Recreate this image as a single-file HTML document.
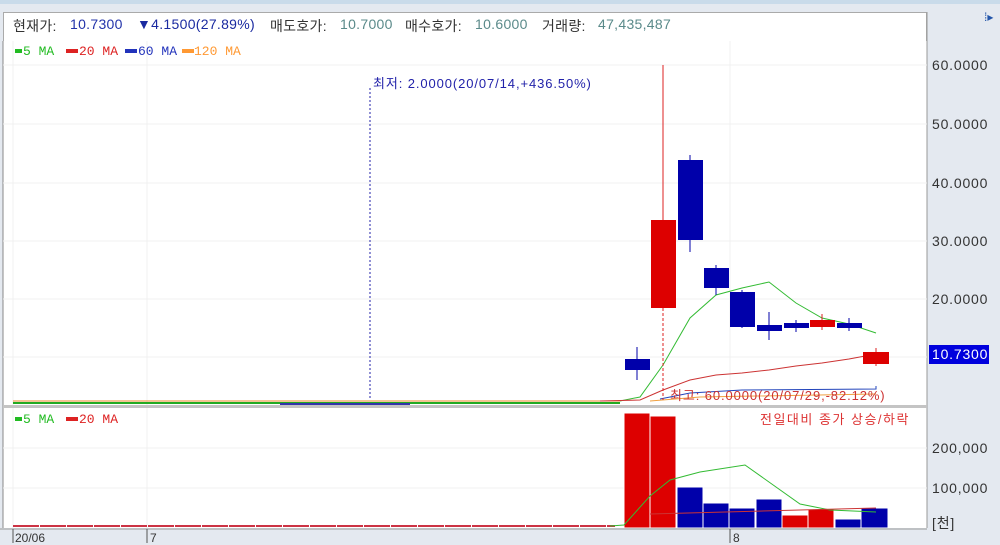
<!DOCTYPE html><html><head><meta charset="utf-8"><style>
body{margin:0;width:1000px;height:543px;overflow:hidden;background:#e4e9f0;font-family:"Liberation Sans","Noto Sans CJK KR",sans-serif;position:relative}
.t{position:absolute;font-size:13px;white-space:nowrap}
.h{position:absolute;top:16px;font-size:14px;white-space:nowrap;letter-spacing:0.3px}
.a{position:absolute;font-size:14px;letter-spacing:0.8px;color:#333;white-space:nowrap}
.l{position:absolute;font-size:13px;font-family:"Liberation Mono",monospace;white-space:nowrap}
</style></head><body>
<div style="position:absolute;left:0;top:0;width:1000px;height:4px;background:#c9dbea"></div>
<div style="position:absolute;left:3px;top:12px;width:922px;height:28px;background:#fff;border:1px solid #aaa;border-bottom:1px solid #ddd"></div>
<div class="h" style="left:13px;color:#333">현재가:</div>
<div class="h" style="left:70px;color:#2233aa">10.7300</div>
<div class="h" style="left:137px;color:#1a2aa0">▼4.1500(27.89%)</div>
<div class="h" style="left:270px;color:#333">매도호가:</div>
<div class="h" style="left:340px;color:#5a8a8a">10.7000</div>
<div class="h" style="left:405px;color:#333">매수호가:</div>
<div class="h" style="left:475px;color:#5a8a8a">10.6000</div>
<div class="h" style="left:542px;color:#333">거래량:</div>
<div class="h" style="left:598px;color:#5a8a8a">47,435,487</div>
<div class="t" style="left:984px;top:10px;color:#2255aa;font-size:12px">⁞▸</div>
<svg style="position:absolute;left:0;top:0" width="1000" height="543">
<rect x="3" y="41" width="924" height="487" fill="#fff"/>
<line x1="3" y1="41" x2="3" y2="528" stroke="#888"/>
<line x1="927" y1="12" x2="927" y2="543" stroke="#999"/>
<g stroke="#f0f0f0">
<line x1="3" y1="65" x2="927" y2="65"/><line x1="3" y1="124" x2="927" y2="124"/><line x1="3" y1="183" x2="927" y2="183"/><line x1="3" y1="241" x2="927" y2="241"/><line x1="3" y1="299" x2="927" y2="299"/><line x1="3" y1="357" x2="927" y2="357"/>
<line x1="3" y1="448" x2="927" y2="448"/><line x1="3" y1="488" x2="927" y2="488"/>
<line x1="147" y1="41" x2="147" y2="528"/><line x1="730" y1="41" x2="730" y2="528"/><line x1="13" y1="41" x2="13" y2="528"/>
</g>
<rect x="3" y="405" width="924" height="3" fill="#c4c4c4"/>
<line x1="13" y1="401" x2="620" y2="401" stroke="#e8892a"/>
<line x1="13" y1="403" x2="620" y2="403" stroke="#22aa22" stroke-width="2"/>
<line x1="280" y1="404" x2="410" y2="404" stroke="#3333aa" stroke-width="2"/>
<line x1="13" y1="526" x2="615" y2="526" stroke="#cc3344" stroke-width="2" stroke-dasharray="26,1"/>
<line x1="370" y1="88" x2="370" y2="398" stroke="#2222aa" stroke-dasharray="2,2"/>
<polyline points="620,401 640,397 663,365 690,318 716,295 742,288 769,282 796,303 822,318 849,324 876,333" fill="none" stroke="#33bb33"/>
<polyline points="600,401 640,400 663,390 690,380 716,375 742,373 769,370 796,366 822,363 849,359 876,354" fill="none" stroke="#cc3333"/>
<polyline points="660,399 690,393 742,390 876,389 876,386" fill="none" stroke="#2244bb"/>
<polyline points="650,401 700,397 876,394" fill="none" stroke="#f0a040"/>
<line x1="663" y1="65" x2="663" y2="220" stroke="#d22"/><line x1="663" y1="308" x2="663" y2="400" stroke="#d22" stroke-dasharray="3,2"/>
<rect x="651" y="220" width="25" height="88" fill="#dd0000"/>
<line x1="637" y1="347" x2="637" y2="380" stroke="#0000aa"/><rect x="625" y="359" width="25" height="11" fill="#0000aa"/>
<line x1="690" y1="155" x2="690" y2="252" stroke="#0000aa"/><rect x="678" y="160" width="25" height="80" fill="#0000aa"/>
<line x1="716" y1="265" x2="716" y2="295" stroke="#0000aa"/><rect x="704" y="268" width="25" height="20" fill="#0000aa"/>
<line x1="742" y1="290" x2="742" y2="328" stroke="#0000aa"/><rect x="730" y="292" width="25" height="35" fill="#0000aa"/>
<line x1="769" y1="312" x2="769" y2="340" stroke="#0000aa"/><rect x="757" y="325" width="25" height="6" fill="#0000aa"/>
<line x1="796" y1="320" x2="796" y2="332" stroke="#0000aa"/><rect x="784" y="323" width="25" height="5" fill="#0000aa"/>
<line x1="822" y1="314" x2="822" y2="330" stroke="#d22"/><rect x="810" y="320" width="25" height="7" fill="#dd0000"/>
<line x1="849" y1="318" x2="849" y2="331" stroke="#0000aa"/><rect x="837" y="323" width="25" height="5" fill="#0000aa"/>
<line x1="876" y1="348" x2="876" y2="366" stroke="#d22"/><rect x="863" y="352" width="26" height="12" fill="#dd0000"/>
<g stroke="#fff">
<rect x="624" y="413" width="26" height="115" fill="#dd0000"/><rect x="650" y="416" width="26" height="112" fill="#dd0000"/>
<rect x="677" y="487" width="26" height="41" fill="#0000aa"/><rect x="703" y="503" width="26" height="25" fill="#0000aa"/>
<rect x="729" y="508" width="26" height="20" fill="#0000aa"/><rect x="756" y="499" width="26" height="29" fill="#0000aa"/>
<rect x="782" y="515" width="26" height="13" fill="#dd0000"/><rect x="808" y="509" width="26" height="19" fill="#dd0000"/>
<rect x="835" y="519" width="26" height="9" fill="#0000aa"/><rect x="861" y="508" width="27" height="20" fill="#0000aa"/>
</g>
<polyline points="610,526 624,525 650,496 670,480 700,472 745,465 800,504 830,510 876,512" fill="none" stroke="#33bb33"/>
<polyline points="650,514 876,508" fill="none" stroke="#cc3333"/>
<rect x="0" y="528" width="1000" height="15" fill="#e4e9f0"/><line x1="0" y1="529" x2="927" y2="529" stroke="#999"/>
<line x1="13" y1="529" x2="13" y2="543" stroke="#555"/><line x1="147" y1="529" x2="147" y2="543" stroke="#555"/><line x1="730" y1="529" x2="730" y2="543" stroke="#555"/>
<rect x="929" y="345" width="60" height="19" fill="#0000dd"/>
<g stroke-width="4">
<line x1="15" y1="51" x2="22" y2="51" stroke="#2b2"/><line x1="66" y1="51" x2="78" y2="51" stroke="#d22"/><line x1="125" y1="51" x2="137" y2="51" stroke="#23b"/><line x1="182" y1="51" x2="194" y2="51" stroke="#f93"/>
<line x1="15" y1="419" x2="22" y2="419" stroke="#2b2"/><line x1="66" y1="419" x2="78" y2="419" stroke="#d22"/>
</g>
</svg>
<div class="l" style="left:23px;top:44px;color:#2b2">5 MA</div>
<div class="l" style="left:79px;top:44px;color:#d22">20 MA</div>
<div class="l" style="left:138px;top:44px;color:#23b">60 MA</div>
<div class="l" style="left:194px;top:44px;color:#f93">120 MA</div>
<div class="l" style="left:23px;top:412px;color:#2b2">5 MA</div>
<div class="l" style="left:79px;top:412px;color:#d22">20 MA</div>
<div class="t" style="left:373px;top:73px;color:#2222aa;font-size:13px;letter-spacing:0.9px">최저: 2.0000(20/07/14,+436.50%)</div>
<div class="t" style="left:670px;top:385px;color:#cc3333;font-size:13px;letter-spacing:0.9px">최고: 60.0000(20/07/29,-82.12%)</div>
<div class="t" style="left:760px;top:409px;color:#dd3333;font-size:13px;letter-spacing:1.5px">전일대비 종가 상승/하락</div>
<div class="a" style="left:932px;top:57px">60.0000</div>
<div class="a" style="left:932px;top:116px">50.0000</div>
<div class="a" style="left:932px;top:175px">40.0000</div>
<div class="a" style="left:932px;top:233px">30.0000</div>
<div class="a" style="left:932px;top:291px">20.0000</div>
<div class="a" style="left:932px;top:346px;color:#fff">10.7300</div>
<div class="a" style="left:932px;top:440px">200,000</div>
<div class="a" style="left:932px;top:480px">100,000</div>
<div class="a" style="left:932px;top:513px">[천]</div>
<div class="t" style="left:15px;top:531px;color:#333;font-size:12px">20/06</div>
<div class="t" style="left:150px;top:531px;color:#333;font-size:12px">7</div>
<div class="t" style="left:733px;top:531px;color:#333;font-size:12px">8</div>
</body></html>
